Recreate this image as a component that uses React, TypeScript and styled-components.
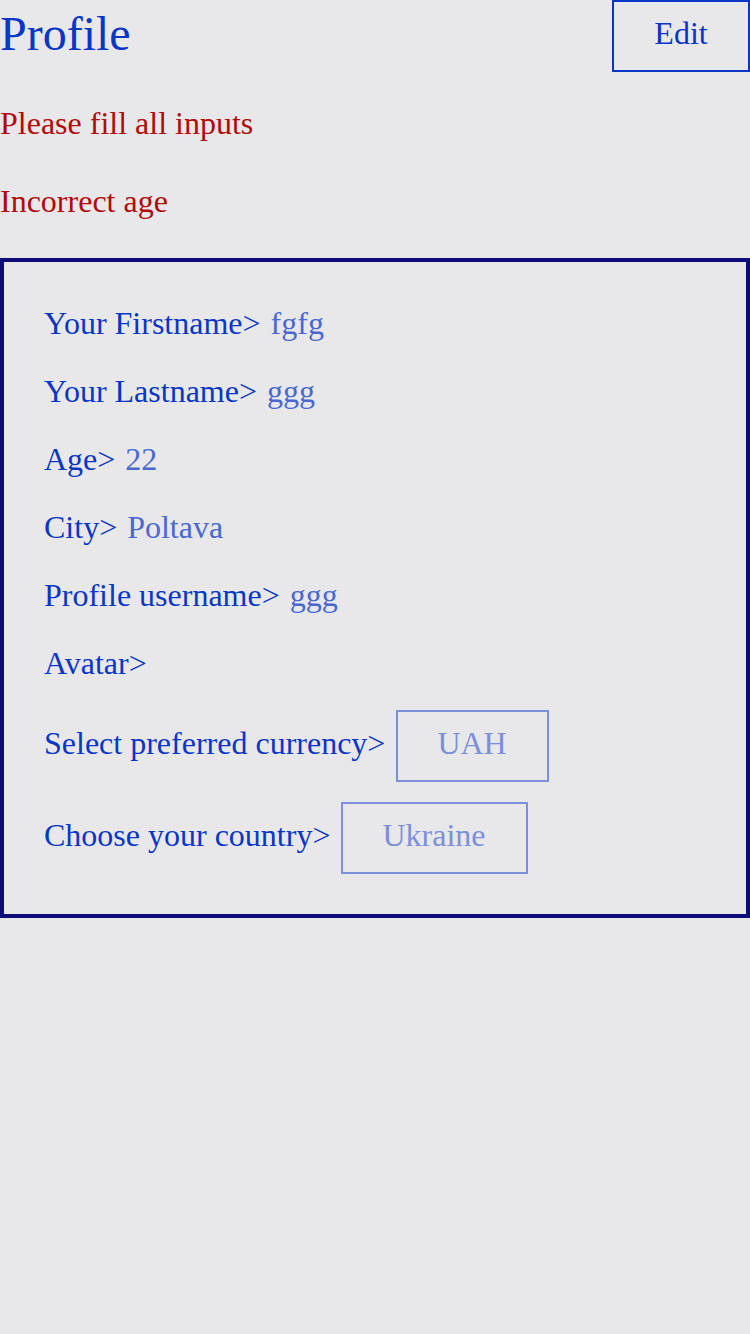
import React from "react";
import styled, { createGlobalStyle } from "styled-components";

const Global = createGlobalStyle`
  html, body { margin: 0; padding: 0; background: #e8e8ea; }
  body { font-family: "Liberation Serif", "Times New Roman", serif; }
  * { box-sizing: border-box; }
`;

const Page = styled.div`
  width: 750px;
  min-height: 1334px;
  background: #e8e8ea;
  display: flex;
  flex-direction: column;
`;

const Header = styled.header`
  display: flex;
  justify-content: space-between;
  align-items: flex-start;
  height: 72px;
`;

const Title = styled.h1`
  margin: 0;
  padding-top: 6px;
  font-size: 48px;
  line-height: 56px;
  font-weight: 400;
  color: #0a36c8;
`;

const EditButton = styled.button`
  width: 138px;
  height: 72px;
  padding: 0 0 6px;
  margin: 0;
  border: 2px solid #0a36c8;
  background: transparent;
  color: #0a36c8;
  font-family: "Liberation Serif", "Times New Roman", serif;
  font-size: 32px;
  line-height: 36px;
  text-align: center;
`;

const ErrorText = styled.p<{ $top: number }>`
  margin: ${(p) => p.$top}px 0 0;
  font-size: 32px;
  line-height: 36px;
  color: #b00a0a;
`;

const Card = styled.section`
  margin-top: 39px;
  border: 4px solid #0e0c78;
  padding: 43px 40px 40px;
  display: flex;
  flex-direction: column;
`;

const Row = styled.div<{ $top?: number }>`
  display: flex;
  align-items: baseline;
  margin-top: ${(p) => (p.$top ?? 32)}px;
  &:first-child { margin-top: 0; }
  font-size: 32px;
  line-height: 36px;
  min-height: 36px;
  white-space: pre;
`;

const Label = styled.span`
  color: #0a36c8;
`;

const Value = styled.span`
  margin-left: 10px;
  color: #4a68d2;
`;

const SelectBox = styled.span`
  display: inline-flex;
  align-items: center;
  height: 72px;
  padding: 0 40px 6px 39px;
  margin-left: 11px;
  border: 2px solid #7b8fda;
  color: #7b8fda;
  font-size: 32px;
`;

const fields: [string, string][] = [
  ["Your Firstname>", "fgfg"],
  ["Your Lastname>", "ggg"],
  ["Age>", "22"],
  ["City>", "Poltava"],
  ["Profile username>", "ggg"],
  ["Avatar>", ""],
];

export default function App() {
  return (
    <Page>
      <Global />
      <Header>
        <Title>Profile</Title>
        <EditButton>Edit</EditButton>
      </Header>
      <ErrorText $top={33}>Please fill all inputs</ErrorText>
      <ErrorText $top={42}>Incorrect age</ErrorText>
      <Card>
        {fields.map(([l, v]) => (
          <Row key={l}>
            <Label>{l}</Label>
            {v && <Value>{v}</Value>}
          </Row>
        ))}
        <Row $top={29}>
          <Label>Select preferred currency&gt;</Label>
          <SelectBox>UAH</SelectBox>
        </Row>
        <Row $top={20}>
          <Label>Choose your country&gt;</Label>
          <SelectBox>Ukraine</SelectBox>
        </Row>
      </Card>
    </Page>
  );
}
